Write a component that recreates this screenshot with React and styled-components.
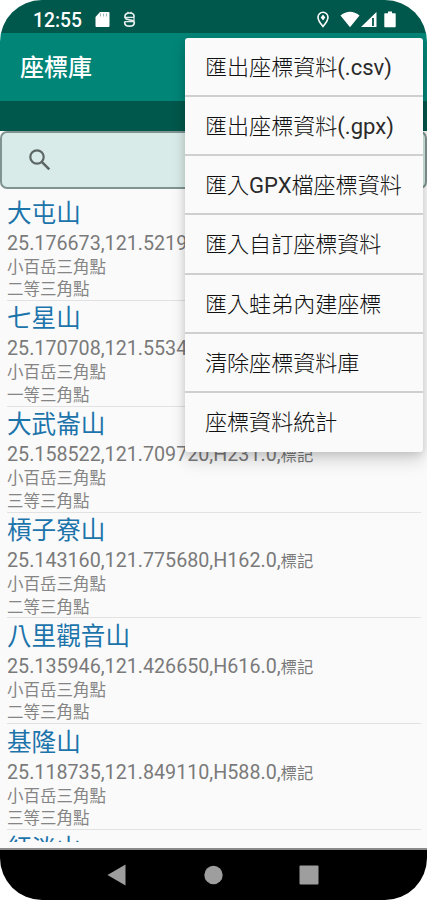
import React from 'react';
import styled, { createGlobalStyle } from 'styled-components';

const GlobalStyle = createGlobalStyle`
  * {
    box-sizing: border-box;
  }
  body {
    margin: 0;
    background: #fff;
    font-family: Roboto, "Noto Sans CJK TC", sans-serif;
  }
`;

const Screen = styled.div`
  position: relative;
  display: flex;
  flex-direction: column;
  width: 427px;
  height: 900px;
  overflow: hidden;
  border-radius: 42px;
  background: #fafafa;
`;

const StatusBar = styled.div`
  display: flex;
  flex: none;
  align-items: center;
  height: 33px;
  padding: 6px 31px 0 33px;
  background: #00574b;
  color: #fff;
`;

const Clock = styled.span`
  width: 62px;
  padding-top: 1px;
  font-size: 19.3px;
  font-weight: 500;
  line-height: 27px;
`;

const StatusIcons = styled.div`
  display: flex;
  flex: 1;
  align-items: center;
  height: 27px;
`;

const StatusIcon = styled.svg`
  display: block;
  flex: none;
  margin-left: ${(props) => props.$gap || 0}px;
`;

const Spacer = styled.span`
  flex: 1;
`;

const AppBar = styled.header`
  display: flex;
  flex: none;
  align-items: center;
  height: 68px;
  padding: 2px 20px 0;
  background: #008577;
`;

const Title = styled.h1`
  margin: 0;
  color: #fff;
  font-size: 24px;
  font-weight: 500;
  line-height: 32px;
`;

const TabStrip = styled.div`
  flex: none;
  height: 30px;
  background: #00574b;
`;

const SearchBox = styled.div`
  display: flex;
  flex: none;
  align-items: center;
  height: 58px;
  padding-left: 27px;
  border: 2px solid #7f9491;
  border-radius: 7px;
  background: #d9ebe8;
`;

const List = styled.div`
  flex: 1;
  min-height: 0;
  margin-bottom: 6px;
  padding: 6px 6px 0 7px;
  overflow: hidden;
`;

const Row = styled.div`
  height: 105.85px;
  padding-top: 1.5px;
  border-bottom: 1px solid #e2e2e2;
`;

const Name = styled.div`
  color: #1c74ab;
  font-size: 24.6px;
  line-height: 34px;
`;

const Coords = styled.div`
  height: 26px;
  color: #7a7a7a;
  font-size: 19.7px;
  line-height: 26px;
  white-space: nowrap;
`;

const Small = styled.span`
  font-size: 16.4px;
`;

const Note = styled.div`
  color: #858585;
  font-size: 16.5px;
  line-height: 22.5px;
`;

const Menu = styled.div`
  position: absolute;
  top: 38px;
  left: 185px;
  width: 238px;
  border-radius: 3px;
  background: #fafafa;
  box-shadow: 0 10px 16px rgba(0, 0, 0, 0.13), 0 2px 8px rgba(0, 0, 0, 0.14);
`;

const MenuItem = styled.div`
  height: 59.15px;
  padding-left: 20px;
  border-bottom: ${(props) => (props.$last ? 'none' : '2px solid #cfcfcf')};
  color: #111;
  font-size: 22.05px;
  font-weight: 300;
  line-height: 60px;
  white-space: nowrap;
`;

const Latin = styled.span`
  color: #2a2a2a;
  font-weight: 400;
`;

const NavBar = styled.div`
  display: flex;
  flex: none;
  align-items: center;
  justify-content: space-between;
  height: 52px;
  padding: 0 108px 1px 107px;
  border-top: 2px solid #8a8a8a;
  background: #000;
`;

const items = [
  { text: '匯出座標資料', latin: '(.csv)' },
  { text: '匯出座標資料', latin: '(.gpx)' },
  { text: '匯入', latin: 'GPX', rest: '檔座標資料' },
  { text: '匯入自訂座標資料' },
  { text: '匯入蛙弟內建座標' },
  { text: '清除座標資料庫' },
  { text: '座標資料統計' },
];

const places = [
  { name: '大屯山', coords: '25.176673,121.521900,H1092.0,', level: '二等三角點' },
  { name: '七星山', coords: '25.170708,121.553400,H1120.0,', level: '一等三角點' },
  { name: '大武崙山', coords: '25.158522,121.709720,H231.0,', level: '三等三角點' },
  { name: '槓子寮山', coords: '25.143160,121.775680,H162.0,', level: '二等三角點' },
  { name: '八里觀音山', coords: '25.135946,121.426650,H616.0,', level: '二等三角點' },
  { name: '基隆山', coords: '25.118735,121.849110,H588.0,', level: '三等三角點' },
];

const Status = () => (
  <StatusBar>
    <Clock>12:55</Clock>
    <StatusIcons>
      <StatusIcon width="15" height="17" viewBox="0 0 15 17">
        <path d="M5 1h8.500q1 0 1 1v13q0 1-1 1h-12q-1 0-1-1V6z" fill="#fff" />
        <path d="M5.500 2.500v3M8.500 2.500v3M11.500 2.500v3" stroke="#9dbbb6" strokeWidth="1" />
      </StatusIcon>
      <StatusIcon $gap={13} width="13" height="17" viewBox="0 0 13 17" fill="none" stroke="#e6efed" strokeWidth="1.700">
        <path d="M2 7V5c0-1.800 2-3 4.500-3S11 3.200 11 5v1.500M2 7.300c1 1.200 3 1.200 4.700 1.500 2.800.4 4.600 1 4.600 2.900 0 2-2 3.400-4.800 3.400s-4.800-1.400-4.800-3.400v-1.200" />
        <path d="M2 6.300h9.300M1.700 10.700h9.600M4.500 0.800l1 1.400M8.500 0.800l-1 1.400M11 7v3" strokeWidth="1.200" />
      </StatusIcon>
      <Spacer />
      <StatusIcon width="14" height="17" viewBox="0 0 14 17">
        <path d="M7 1.300a5 5 0 0 0-5 5c0 3.500 5 9.200 5 9.200s5-5.700 5-9.200a5 5 0 0 0-5-5z" fill="none" stroke="#fff" strokeWidth="1.600" />
        <path d="M7 3.600 9.300 6.500 7 9.400 4.700 6.500z" fill="#fff" />
      </StatusIcon>
      <StatusIcon $gap={10} width="20" height="17" viewBox="0 0 20 17">
        <path d="M0.500 4.500Q10-3 19.500 4.500L10 16.200z" fill="#fff" />
      </StatusIcon>
      <StatusIcon width="17" height="17" viewBox="0 0 17 17">
        <path d="M1 16 16.500 1v15z" fill="#fff" />
        <path d="M13 7v8" stroke="#00574b" strokeWidth="1.800" />
      </StatusIcon>
      <StatusIcon $gap={7} width="12" height="17" viewBox="0 0 12 17">
        <path d="M4 0.500h4v1.700h3q.7 0 .7.700v12.600q0 .7-.7.700H1q-.7 0-.7-.7V2.900q0-.7.7-.7h3z" fill="#fff" />
      </StatusIcon>
    </StatusIcons>
  </StatusBar>
);

const Place = ({ place }) => (
  <Row>
    <Name>{place.name}</Name>
    <Coords>
      {place.coords}
      <Small>標記</Small>
    </Coords>
    <Note>小百岳三角點</Note>
    <Note>{place.level}</Note>
  </Row>
);

const App = () => (
  <>
    <GlobalStyle />
    <Screen>
      <Status />
      <AppBar>
        <Title>座標庫</Title>
      </AppBar>
      <TabStrip />
      <SearchBox>
        <svg width="22" height="22" viewBox="0 0 22 22" fill="none" stroke="#5c6664" strokeWidth="2.200">
          <circle cx="8" cy="8" r="6.700" />
          <path d="M12.800 12.800 20.300 20.300" strokeWidth="2.600" />
        </svg>
      </SearchBox>
      <List>
        {places.map((place) => (
          <Place key={place.name} place={place} />
        ))}
        <Row>
          <Name>紅淡山</Name>
        </Row>
      </List>
      <NavBar>
        <svg width="19" height="22" viewBox="0 0 19 22">
          <path d="M18.500 0.500v21L0.500 11z" fill="#9e9e9e" />
        </svg>
        <svg width="20" height="20" viewBox="0 0 20 20">
          <circle cx="10.500" cy="10" r="9.200" fill="#9e9e9e" />
        </svg>
        <svg width="20" height="20" viewBox="0 0 20 20">
          <rect x="0.500" y="0.500" width="19" height="19" rx="1" fill="#9e9e9e" />
        </svg>
      </NavBar>
      <Menu>
        {items.map((item, i) => (
          <MenuItem key={i} $last={i === items.length - 1}>
            {item.text}
            {item.latin && <Latin>{item.latin}</Latin>}
            {item.rest}
          </MenuItem>
        ))}
      </Menu>
    </Screen>
  </>
);

export default App;
